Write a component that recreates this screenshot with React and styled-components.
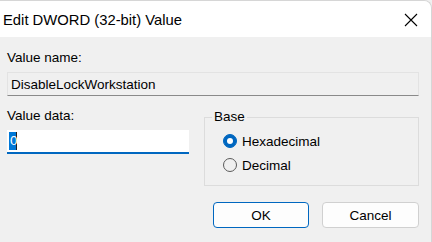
import React from 'react';
import styled, { createGlobalStyle } from 'styled-components';

const Global = createGlobalStyle`
  html, body {
    margin: 0;
    padding: 0;
    background: #f0f0f0;
  }
  * {
    box-sizing: border-box;
  }
`;

const Window = styled.div`
  width: 432px;
  height: 242px;
  background: #f0f0f0;
  border-top-right-radius: 8px;
  border-top: 1px solid #d6d6d6;
  border-right: 1px solid #d6d6d6;
  overflow: hidden;
  font-family: "Liberation Sans", Arial, sans-serif;
  font-size: 13.5px;
  color: #000;
  display: flex;
  flex-direction: column;
`;

const TitleBar = styled.div`
  height: 36px;
  background: #fff;
  display: flex;
  align-items: center;
  justify-content: space-between;
  padding: 2px 13px 0 3px;
`;

const Title = styled.span`
  font-size: 14.8px;
`;

const Body = styled.div`
  flex: 1;
  display: flex;
  flex-direction: column;
  padding: 13px 12px 0 7px;
`;

const Label = styled.div`
  line-height: 16px;
  margin-bottom: ${({ gap }) => gap}px;
`;

const NameBox = styled.div`
  height: 24px;
  border: 1px solid #e3e3e3;
  border-bottom: 1px solid #8a8a8a;
  display: flex;
  align-items: center;
  padding-left: 3px;
`;

const Row = styled.div`
  display: grid;
  grid-template-columns: 182px 215px;
  column-gap: 15px;
  margin-top: 12px;
`;

const Column = styled.div`
  display: flex;
  flex-direction: column;
`;

const DataInput = styled.div`
  height: 24px;
  background: #fff;
  border-bottom: 2px solid #0067c0;
  display: flex;
  align-items: center;
  padding-left: 2px;
`;

const Selected = styled.span`
  background: #0078d7;
  color: #fff;
  height: 18px;
  line-height: 18px;
  padding: 0 0 0 1px;
  width: 8px;
  border-right: 1px solid #222;
`;

const Group = styled.fieldset`
  margin: 2px 0 0 0;
  padding: 10px 0 0 18px;
  height: 76px;
  border: 1px solid #dcdcdc;
  display: flex;
  flex-direction: column;
  gap: 10px;
`;

const Legend = styled.legend`
  padding: 0 2px;
  margin-left: -11px;
  line-height: 14px;
`;

const Option = styled.div`
  display: flex;
  align-items: center;
  gap: 5px;
  height: 14px;
`;

const Radio = styled.span`
  width: 14px;
  height: 14px;
  border-radius: 50%;
  display: flex;
  align-items: center;
  justify-content: center;
  background: ${({ checked }) => (checked ? '#0067c0' : 'transparent')};
  border: 1px solid ${({ checked }) => (checked ? '#0067c0' : '#5a5a5a')};

  &::after {
    content: '';
    display: ${({ checked }) => (checked ? 'block' : 'none')};
    width: 6px;
    height: 6px;
    border-radius: 50%;
    background: #fff;
  }
`;

const Buttons = styled.div`
  display: flex;
  justify-content: flex-end;
  gap: 13px;
  margin-top: 16px;
`;

const Button = styled.div`
  width: ${({ w }) => w}px;
  height: 26px;
  border-radius: 4px;
  background: #fdfdfd;
  border: 1px solid ${({ primary }) => (primary ? '#0067c0' : '#d0d0d0')};
  display: flex;
  align-items: center;
  justify-content: center;
`;

const CloseIcon = () => (
  <svg width="14" height="14" viewBox="0 0 14 14">
    <path d="M1 1 L13 13 M13 1 L1 13" stroke="#000" strokeWidth="1.1" />
  </svg>
);

export default function App() {
  return (
    <>
      <Global />
      <Window>
        <TitleBar>
          <Title>Edit DWORD (32-bit) Value</Title>
          <CloseIcon />
        </TitleBar>
        <Body>
          <Label gap={6}>Value name:</Label>
          <NameBox>DisableLockWorkstation</NameBox>
          <Row>
            <Column>
              <Label gap={6}>Value data:</Label>
              <DataInput>
                <Selected>0</Selected>
              </DataInput>
            </Column>
            <Group>
              <Legend>Base</Legend>
              <Option>
                <Radio checked />
                Hexadecimal
              </Option>
              <Option>
                <Radio />
                Decimal
              </Option>
            </Group>
          </Row>
          <Buttons>
            <Button primary w={96}>OK</Button>
            <Button w={97}>Cancel</Button>
          </Buttons>
        </Body>
      </Window>
    </>
  );
}
